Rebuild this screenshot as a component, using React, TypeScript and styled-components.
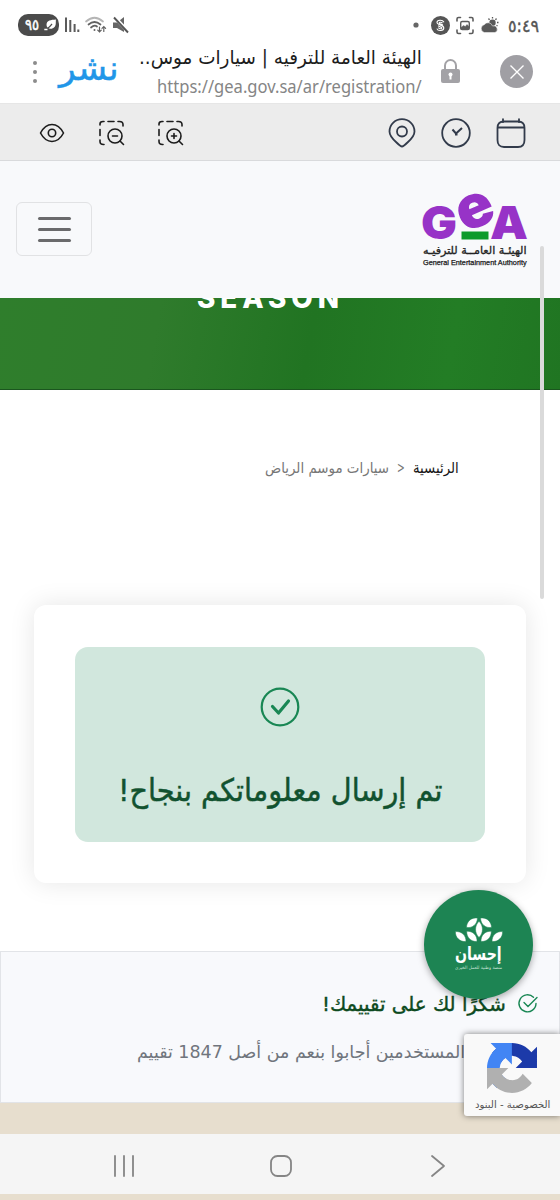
import React, { useLayoutEffect, useRef, useState } from "react";
import styled, { createGlobalStyle } from "styled-components";

const GlobalStyle = createGlobalStyle`
  * { box-sizing: border-box; }
  body { margin: 0; background: #fff; font-family: "Noto Sans", "DejaVu Sans", sans-serif; }
  svg { display: block; flex: none; overflow: visible; }
`;

/* Text that is condensed or stretched to a known line width */
const FitBox = styled.div<{ $w: number; $h: number }>`
  width: ${(p) => p.$w}px;
  height: ${(p) => p.$h}px;
  flex: none;
  white-space: nowrap;
  direction: ltr;
  line-height: ${(p) => p.$h}px;
  text-align: left;
`;
const FitInner = styled.span`
  display: inline-block;
  transform-origin: 0 50%;
`;
type FitProps = { w: number; h: number; rtl?: boolean; className?: string; children: React.ReactNode };
function Fit({ w, h, rtl = true, className, children }: FitProps) {
  const ref = useRef<HTMLSpanElement>(null);
  const [scale, setScale] = useState(1);
  useLayoutEffect(() => {
    if (ref.current) setScale(w / ref.current.offsetWidth);
  }, [w]);
  return (
    <FitBox $w={w} $h={h} className={className}>
      <FitInner ref={ref} dir={rtl ? "rtl" : "ltr"} style={{ transform: `scaleX(${scale})` }}>
        {children}
      </FitInner>
    </FitBox>
  );
}

const Screen = styled.div`
  position: relative;
  width: 560px;
  height: 1200px;
  display: flex;
  flex-direction: column;
  overflow: hidden;
  background: #fff;
`;

/* Status bar */
const StatusBar = styled.div`
  height: 42px;
  flex: none;
  display: flex;
  justify-content: space-between;
  padding: 8px 21px 0 18px;
`;
const StatusGroup = styled.div<{ $gap: number }>`
  height: 34px;
  display: flex;
  align-items: center;
  gap: ${(p) => p.$gap}px;
`;
const Battery = styled.div`
  width: 41px;
  height: 22px;
  border-radius: 10px;
  background: #4b4b4b;
  display: flex;
  align-items: center;
  padding-left: 7px;
  gap: 5px;
`;
const BatteryText = styled(Fit)`
  color: #fff;
  -webkit-text-stroke: 0.5px #fff;
  font: 15px "DejaVu Sans", sans-serif;
  line-height: 21px;
`;
const Clock = styled(Fit)`
  margin: 2px 0 0 3px;
  color: #555;
  -webkit-text-stroke: 0.4px #555;
  font: 17px "DejaVu Sans", sans-serif;
  line-height: 24px;
`;

/* Browser address row */
const AddressBar = styled.div`
  height: 62px;
  flex: none;
  display: flex;
  padding: 0 27px 0 30px;
  border-bottom: 1px solid #e6e6e6;
`;
const MenuDots = styled.div`
  width: 9px;
  height: 60px;
  display: flex;
  flex-direction: column;
  align-items: center;
  justify-content: center;
  gap: 5px;
  i { width: 4px; height: 4px; border-radius: 50%; background: #8c8c8c; }
`;
const Share = styled(Fit)`
  margin: 9px 0 0 20px;
  color: #2196e8;
  -webkit-text-stroke: 0.5px #2196e8;
  font: 34px "DejaVu Sans", sans-serif;
  line-height: 34px;
`;
const PageInfo = styled.div`
  width: 283px;
  margin-left: 20px;
  display: flex;
  flex-direction: column;
  align-items: flex-end;
`;
const PageTitle = styled(Fit)`
  color: #1c1c1c;
  font: 19px "DejaVu Sans", sans-serif;
  line-height: 30px;
`;
const PageUrl = styled(Fit)`
  margin-top: 1px;
  color: #858585;
  font: 18px "Noto Sans", sans-serif;
  line-height: 26px;
`;
const LockSlot = styled.div`
  margin: 16px 0 0 19px;
`;
const CloseButton = styled.div`
  width: 33px;
  height: 33px;
  margin: 13px 0 0 auto;
  border-radius: 50%;
  background: #a09fa4;
  display: flex;
  align-items: center;
  justify-content: center;
`;

/* Accessibility tools */
const Tools = styled.div`
  height: 57px;
  flex: none;
  display: flex;
  align-items: center;
  justify-content: space-between;
  background: #ececec;
  border-bottom: 1px solid #d9dadc;
  padding: 2px 34px 0 39px;
`;
const ToolGroup = styled.div<{ $gap: number }>`
  display: flex;
  align-items: center;
  gap: ${(p) => p.$gap}px;
`;

/* Site header */
const SiteHeader = styled.div`
  height: 137px;
  flex: none;
  display: flex;
  justify-content: space-between;
  background: #f8f9fb;
  padding: 29px 32px 0 16px;
`;
const Burger = styled.div`
  width: 76px;
  height: 54px;
  margin-top: 12px;
  border: 1.5px solid #e1e2e4;
  border-radius: 6px;
  display: flex;
  flex-direction: column;
  align-items: center;
  justify-content: center;
  gap: 8px;
  i { width: 33px; height: 3px; border-radius: 2px; background: #6a6a6c; }
`;
const Brand = styled.div`
  width: 106px;
  display: flex;
  flex-direction: column;
  align-items: center;
`;
const BrandAr = styled(Fit)`
  margin-top: 1px;
  color: #222;
  -webkit-text-stroke: 0.3px #222;
  font: 11px "DejaVu Sans", sans-serif;
  line-height: 14px;
`;
const BrandEn = styled(Fit)`
  color: #1a1a1a;
  -webkit-text-stroke: 0.25px #1a1a1a;
  font: 7px "Liberation Sans", sans-serif;
  line-height: 10px;
`;

const Banner = styled.div`
  height: 92px;
  flex: none;
  overflow: hidden;
  padding-left: 197px;
  border-bottom: 1.5px solid #1b561f;
  background: linear-gradient(100deg, #2f7e2c 0%, #2f7b2c 28%, #217422 55%, #237d25 80%, #207522 100%);
`;
const Season = styled(Fit)`
  margin-top: -16px;
  color: #fff;
  font: 800 28px Inter, sans-serif;
  letter-spacing: 5px;
  line-height: 32px;
`;

/* Page content */
const Content = styled.div`
  height: 561px;
  flex: none;
  padding: 65px 34px 0 34px;
`;
const Breadcrumb = styled.div`
  display: flex;
  align-items: center;
  height: 26px;
  padding-left: 231px;
  gap: 8px;
`;
const Crumb = styled(Fit)<{ $current?: boolean }>`
  color: ${(p) => (p.$current ? "#777" : "#151515")};
  font: 15px "DejaVu Sans", sans-serif;
  line-height: 26px;
`;
const Card = styled.div`
  height: 278px;
  margin-top: 124px;
  padding: 42px 41px 0;
  border-radius: 12px;
  background: #fff;
  box-shadow: 0 0 26px rgba(0, 0, 0, 0.1);
`;
const Success = styled.div`
  height: 195px;
  border-radius: 13px;
  background: #d1e7dd;
  display: flex;
  flex-direction: column;
  align-items: center;
  padding-top: 40px;
`;
const SuccessText = styled(Fit)`
  margin-top: 42px;
  color: #11522f;
  -webkit-text-stroke: 0.5px #11522f;
  font: 31px "DejaVu Sans", sans-serif;
  line-height: 42px;
`;

/* Rating summary */
const Feedback = styled.div`
  height: 152px;
  flex: none;
  display: flex;
  flex-direction: column;
  align-items: flex-end;
  padding: 38px 21px 0 0;
  background: #f8f9fc;
  border: 1px solid #e2e4e8;
`;
const ThanksRow = styled.div`
  display: flex;
  align-items: center;
  gap: 12px;
`;
const Thanks = styled(Fit)`
  color: #0d4a20;
  -webkit-text-stroke: 0.4px #0d4a20;
  font: 20px "DejaVu Sans", sans-serif;
  line-height: 28px;
`;
const Stats = styled(Fit)`
  margin: 20px 73px 0 0;
  color: #70757d;
  font: 17.5px "DejaVu Sans", sans-serif;
  line-height: 28px;
`;
const FooterEdge = styled.div<{ $h: number }>`
  height: ${(p) => p.$h}px;
  flex: none;
  background: #e7dece;
`;
const NavBar = styled.div`
  height: 60px;
  flex: none;
  display: flex;
  align-items: center;
  padding: 4px 0 0 113px;
  background: #f5f5f5;
`;
const HomeKey = styled.div`
  margin: 0 137px 0 134px;
`;

/* Overlays */
const ScrollThumb = styled.div`
  position: absolute;
  left: 540px;
  top: 246px;
  width: 4px;
  height: 353px;
  border-radius: 2px;
  background: #dadada;
`;
const Ehsan = styled.div`
  position: absolute;
  left: 424px;
  top: 890px;
  width: 109px;
  height: 109px;
  border-radius: 50%;
  background: #1d8453;
  box-shadow: 0 2px 7px rgba(0, 0, 0, 0.35);
  display: flex;
  flex-direction: column;
  align-items: center;
  padding-top: 26px;
`;
const EhsanName = styled(Fit)`
  margin-top: 1px;
  color: #fff;
  font: 700 18px "DejaVu Sans", sans-serif;
  line-height: 20px;
`;
const EhsanTag = styled(Fit)`
  margin-top: 1px;
  color: #c5e2d4;
  font: 4.5px "DejaVu Sans", sans-serif;
  line-height: 6px;
`;
const Captcha = styled.div`
  position: absolute;
  left: 464px;
  top: 1034px;
  width: 96px;
  height: 82px;
  padding-top: 9px;
  border-radius: 3px 0 0 3px;
  background: #f9f9f9;
  box-shadow: 0 0 6px rgba(0, 0, 0, 0.5);
`;
const CaptchaLogo = styled.div`
  padding-left: 23px;
`;
const CaptchaText = styled(Fit)`
  margin: 4px 0 0 11px;
  color: #555;
  font: 10px "DejaVu Sans", sans-serif;
  line-height: 16px;
`;

const LEAF = "M0 0C-4.600 -4 -4.600 -10.500 0 -14.500C4.600 -10.500 4.600 -4 0 0Z";
const LEAVES = [
  "translate(24 21.500) scale(1 1.120)",
  "translate(11.500 11.500) rotate(49)",
  "translate(36.500 11.500) rotate(-49)",
  "translate(22 25.500) rotate(-45)",
  "translate(26 25.500) rotate(45)",
  "translate(11 25.500) rotate(-47)",
  "translate(37 25.500) rotate(47)",
];

export default function App() {
  return (
    <>
      <GlobalStyle />
      <Screen>
        <StatusBar>
          <StatusGroup $gap={6}>
            <Battery>
              <BatteryText w={14} h={20}>٩٥</BatteryText>
              <svg width="13" height="12" viewBox="0 0 13 12">
                <path d="M12 .5C7 1 2.500 1 2.500 6C2.500 10 8 11 10.500 8C12.500 6 11.500 3 12 .5Z" fill="#fff" />
                <path d="M.5 10.500C4 10.500 6 7.500 8 5" fill="none" stroke="#4b4b4b" strokeWidth="1.300" />
                <path d="M.3 10.500H3.500" stroke="#fff" strokeWidth="1.500" />
              </svg>
            </Battery>
            <svg width="14" height="18" viewBox="0 0 14 18" fill="#5b5b5b">
              <path d="M0 1.500h2V16H0zM4.300 4h2v12h-2zM8.600 8h2v8h-2zM12.300 13.500h2V16h-2z" />
            </svg>
            <svg width="22" height="18" viewBox="0 0 22 18" fill="none" stroke="#626262" strokeWidth="1.700" strokeLinecap="round">
              <path d="M1 5.500Q9.500 -2 18 5.500" stroke="#b5b5b5" />
              <path d="M3.500 8.500Q9.500 3.500 15.500 8.500M6 11.500Q9.500 8.500 12 10.500" />
              <circle cx="9.500" cy="14" r="1" fill="#626262" stroke="none" />
              <path d="M14.500 11v5m-1.800 -1.800l1.800 1.800l1.800 -1.800M18.800 15.500V10.500m-1.800 1.800l1.800-1.800l1.800 1.800" strokeWidth="1.200" />
            </svg>
            <svg width="17" height="18" viewBox="0 0 17 18">
              <path d="M0 6.500h4L11 1v15L4 12H0z" fill="#666" />
              <path d="M1.500 1L15.500 16" stroke="#fff" strokeWidth="3.400" />
              <path d="M1 1.500L15 16.500" stroke="#555" strokeWidth="1.900" />
            </svg>
          </StatusGroup>
          <StatusGroup $gap={6}>
            <svg width="12" height="6"><circle cx="3" cy="3" r="2.600" fill="#666" /></svg>
            <svg width="19" height="19" viewBox="0 0 19 19">
              <circle cx="9.500" cy="9.500" r="9.500" fill="#555" />
              <path d="M13 6.200C11.500 3.500 6 3.800 6 6.500C6 9.300 12.800 8.500 12.800 12C12.800 15 7 15.500 5.800 12.600M11.500 7C9.500 5.500 7.500 6.500 8.500 7.500L12 9M7.300 11.700C9 13.500 11.700 12.700 10.500 11.500L7 9.800" fill="none" stroke="#fff" strokeWidth="1.100" />
            </svg>
            <svg width="18" height="19" viewBox="0 0 18 19" fill="none" stroke="#5c5c5c" strokeWidth="1.600" strokeLinecap="round">
              <path d="M1 5V3Q1 1.500 2.500 1.500H4.500M13.500 1.500h2Q17 1.500 17 3v2M17 14v2q0 1.500-1.500 1.500h-2M4.500 17.500h-2Q1 17.500 1 16v-2" />
              <rect x="4.700" y="5.500" width="8.600" height="8" rx="1.500" strokeWidth="1.400" />
              <path d="M5 11.500l2.500-2l1.800 1L11 8.500l2 2v2.500H5z" fill="#5c5c5c" strokeWidth=".4" />
            </svg>
            <svg width="19" height="17" viewBox="0 0 19 17" fill="#5a5a5a">
              <circle cx="12.500" cy="5.800" r="3.200" />
              <path d="M12.500 0v1.500M8.500 1.500l1 1.300M16.500 1.500l-1 1.300M18.500 5.500H17M17.500 9l-1-.7" stroke="#5a5a5a" strokeWidth="1.300" />
              <path d="M4.500 15.500a4 4 0 0 1-.3-7.800A4.700 4.700 0 0 1 12.500 9a3.300 3.300 0 0 1 2.500 6.500z" stroke="#fff" strokeWidth=".5" />
            </svg>
            <Clock w={31} h={24}>٥:٤٩</Clock>
          </StatusGroup>
        </StatusBar>

        <AddressBar>
          <MenuDots><i /><i /><i /></MenuDots>
          <Share w={60} h={34}>نشر</Share>
          <PageInfo>
            <PageTitle w={283} h={30}>الهيئة العامة للترفيه | سيارات موس..</PageTitle>
            <PageUrl w={265} h={26} rtl={false}>https://gea.gov.sa/ar/registration/</PageUrl>
          </PageInfo>
          <LockSlot>
            <svg width="19" height="27" viewBox="0 0 19 27">
              <path d="M4 12V7.500a5.500 5.500 0 0 1 11 0V12" fill="none" stroke="#a3a2a6" strokeWidth="2" />
              <rect x="0" y="11" width="19" height="14" rx="2" fill="#a3a2a6" />
              <path d="M9.500 15.500v6" stroke="#fff" strokeWidth="2" />
              <circle cx="9.500" cy="16.500" r="2" fill="#fff" />
            </svg>
          </LockSlot>
          <CloseButton>
            <svg width="14" height="14" stroke="#fff" strokeWidth="1.400"><path d="M.5 .5l13 13M13.500 .5l-13 13" /></svg>
          </CloseButton>
        </AddressBar>

        <Tools>
          <ToolGroup $gap={34}>
            <svg width="26" height="20" viewBox="0 0 26 20" fill="none" stroke="#1c1c1c" strokeWidth="1.600">
              <path d="M1.500 10Q6 1.500 13 1.500T24.500 10Q20 18.500 13 18.500T1.500 10Z" strokeLinejoin="round" />
              <circle cx="13" cy="10" r="3.700" />
            </svg>
            {[false, true].map((plus) => (
              <svg key={String(plus)} width="25" height="26" viewBox="0 0 25 26" fill="none" stroke="#1c1c1c" strokeWidth="1.600" strokeLinecap="round">
                <path d="M1 5V4Q1 1.500 4 1.500H5M9 1.500h6M19 1.500h1.500Q24 1.500 24 4.500V6M1 9.500v6M1 20v1.500Q1 24.500 4.500 24.500H5" />
                <circle cx="16" cy="16" r="7" />
                <path d={plus ? "M13.500 16h5M16 13.500v5M21 21l3.500 3.500" : "M13.500 16h5M21 21l3.500 3.500"} />
              </svg>
            ))}
          </ToolGroup>
          <ToolGroup $gap={25}>
            <svg width="28" height="30" viewBox="0 0 28 30" fill="none" stroke="#323b4b" strokeWidth="1.800">
              <path d="M14 28.500Q12.500 28.500 8 24Q1.500 18 1.500 13.500C1.500 6 7.500 1.200 14 1.200S26.500 6 26.500 13.500Q26.500 18 20 24Q15.500 28.500 14 28.500Z" />
              <circle cx="14" cy="13.500" r="5" />
            </svg>
            <svg width="30" height="30" viewBox="0 0 30 30" fill="none" stroke="#323b4b" strokeWidth="1.800">
              <circle cx="15" cy="15" r="13.800" />
              <path d="M11.500 11.500l3.500 4l6-5.500M14 16.500h2.500" strokeWidth="2" />
            </svg>
            <svg width="30" height="30" viewBox="0 0 30 30" fill="none" stroke="#323b4b" strokeWidth="1.800" strokeLinecap="round">
              <path d="M7 3.500H23Q28.500 4 28.500 10V22Q28.500 29 22 29H8Q1.500 29 1.500 22V10Q1.500 4 7 3.500ZM1.500 9.500h27M7 1.200v3M23 1.200v3" />
            </svg>
          </ToolGroup>
        </Tools>

        <SiteHeader>
          <Burger><i /><i /><i /></Burger>
          <Brand>
            <svg width="106" height="53" viewBox="0 0 106 53" fontFamily="Inter, sans-serif" fontWeight="900" fill="#9733c7">
              <text x="-1" y="49" fontSize="46" textLength="36" lengthAdjust="spacingAndGlyphs">G</text>
              <text x="68" y="49" fontSize="46" textLength="38" lengthAdjust="spacingAndGlyphs">A</text>
              <text x="-18" y="17" fontSize="60" transform="translate(52.500 20.500) rotate(-24)" textLength="37" lengthAdjust="spacingAndGlyphs">e</text>
              <path d="M39.500 41.500h27v8h-27z" fill="#0c9a2c" />
            </svg>
            <BrandAr w={104} h={14}>الهيئـة العامــة للترفيـه</BrandAr>
            <BrandEn w={104} h={10} rtl={false}>General Entertainment Authority</BrandEn>
          </Brand>
        </SiteHeader>

        <Banner>
          <Season w={147} h={32} rtl={false}>SEASON</Season>
        </Banner>

        <Content>
          <Breadcrumb>
            <Crumb $current w={124} h={26}>سيارات موسم الرياض</Crumb>
            <Crumb $current w={8} h={26} rtl={false}>&gt;</Crumb>
            <Crumb w={46} h={26}>الرئيسية</Crumb>
          </Breadcrumb>
          <Card>
            <Success>
              <svg width="40" height="40" viewBox="0 0 40 40" fill="none" stroke="#198754">
                <circle cx="20" cy="20" r="18.300" strokeWidth="2.200" />
                <path d="M12.500 19.500L18.500 26L28.500 14" strokeWidth="3.200" strokeLinecap="round" strokeLinejoin="round" />
              </svg>
              <SuccessText w={325} h={42}>تم إرسال معلوماتكم بنجاح!</SuccessText>
            </Success>
          </Card>
        </Content>

        <Feedback>
          <ThanksRow>
            <Thanks w={184} h={28}>شكرًا لك على تقييمك!</Thanks>
            <svg width="20" height="20" viewBox="0 0 20 20" fill="none" stroke="#198754" strokeWidth="1.400" strokeLinecap="round">
              <path d="M15.500 3.300A8.500 8.500 0 1 0 18 9.500M6 8.500l4 4L19 3.500" />
            </svg>
          </ThanksRow>
          <Stats w={328} h={28}>المستخدمين أجابوا بنعم من أصل 1847 تقييم</Stats>
        </Feedback>
        <FooterEdge $h={31} />
        <NavBar>
          <svg width="22" height="22" stroke="#858585" strokeWidth="1.800" strokeLinecap="round"><path d="M2 1v20M11 1v20M20 1v20" /></svg>
          <HomeKey>
            <svg width="24" height="24" fill="none" stroke="#858585" strokeWidth="1.800"><rect x="2" y="2" width="20" height="20" rx="6.500" /></svg>
          </HomeKey>
          <svg width="16" height="22" fill="none" stroke="#858585" strokeWidth="1.800" strokeLinecap="round" strokeLinejoin="round"><path d="M2 1l12 10L2 21" /></svg>
        </NavBar>
        <FooterEdge $h={6} />

        <ScrollThumb />
        <Ehsan>
          <svg width="48" height="27" viewBox="0 0 48 27" fill="#fff" stroke="#1d8453" strokeWidth=".5">
            {LEAVES.map((t) => <path key={t} d={LEAF} transform={t} />)}
          </svg>
          <EhsanName w={47} h={20}>إحسان</EhsanName>
          <EhsanTag w={47} h={6}>منصة وطنية للعمل الخيري</EhsanTag>
        </Ehsan>
        <Captcha>
          <CaptchaLogo>
            <svg width="50" height="50" viewBox="0 0 64 64">
              <path fill="#1c3aa9" d="M64 31.955l-.033-1.370V4.687l-7.160 7.160C50.948 4.674 42.033.093 32.050.093c-10.400 0-19.622 4.960-25.458 12.640l11.736 11.860a15.550 15.550 0 0 1 4.754-5.334c2.050-1.600 4.952-2.906 8.968-2.906.485 0 .86.057 1.135.163 4.976.393 9.288 3.140 11.828 7.124l-8.307 8.307L64 31.953" />
              <path fill="#4285f4" d="M31.862.094l-1.370.033H4.594l7.160 7.160C4.580 13.147 0 22.060 0 32.046c0 10.400 4.960 19.622 12.640 25.458L24.500 45.768a15.550 15.550 0 0 1-5.334-4.754c-1.600-2.050-2.906-4.952-2.906-8.968 0-.485.057-.86.163-1.135.393-4.976 3.140-9.288 7.124-11.828l8.307 8.307L31.860.095" />
              <path fill="#b0b0b0" d="M.001 32.045l.033 1.370v25.898l7.160-7.160c5.860 7.173 14.774 11.754 24.760 11.754 10.400 0 19.622-4.960 25.458-12.640l-11.736-11.860a15.550 15.550 0 0 1-4.754 5.334c-2.050 1.600-4.952 2.906-8.968 2.906-.485 0-.86-.057-1.135-.163-4.976-.393-9.288-3.140-11.828-7.124l8.307-8.307L0 32.047" />
            </svg>
          </CaptchaLogo>
          <CaptchaText w={75} h={16}>الخصوصية - البنود</CaptchaText>
        </Captcha>
      </Screen>
    </>
  );
}
